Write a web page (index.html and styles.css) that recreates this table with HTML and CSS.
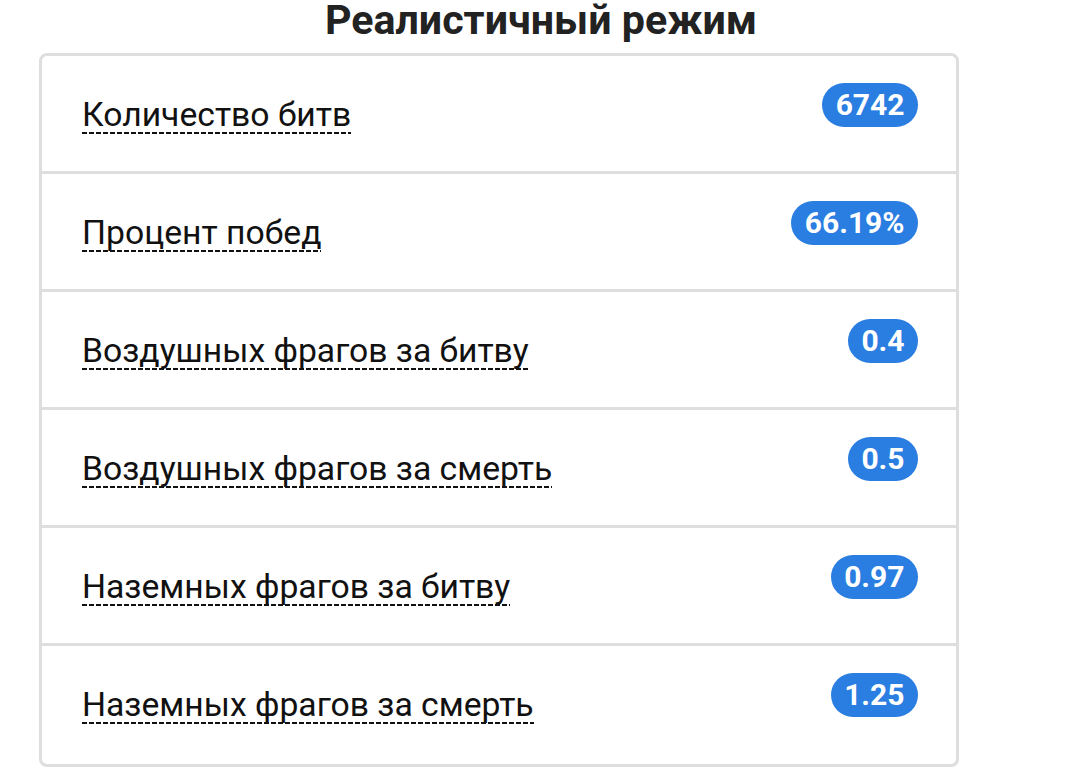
FILE: index.html
```html
<!DOCTYPE html>
<html lang="ru">
<head>
<meta charset="utf-8">
<link rel="stylesheet" href="styles.css">
</head>
<body>
<div class="page">
  <h2 class="title">Реалистичный режим</h2>
  <div class="card">
    <div class="row"><span class="label">Количество битв</span><span class="badge">6742</span></div>
    <div class="row"><span class="label">Процент побед</span><span class="badge">66.19%</span></div>
    <div class="row"><span class="label">Воздушных фрагов за битву</span><span class="badge">0.4</span></div>
    <div class="row"><span class="label">Воздушных фрагов за смерть</span><span class="badge">0.5</span></div>
    <div class="row"><span class="label">Наземных фрагов за битву</span><span class="badge">0.97</span></div>
    <div class="row"><span class="label">Наземных фрагов за смерть</span><span class="badge">1.25</span></div>
  </div>
</div>
</body>
</html>
```
FILE: styles.css
```css
html, body {
  margin: 0;
  padding: 0;
  background: #fff;
  font-family: Roboto, "Noto Sans", sans-serif;
  overflow: hidden;
}
.page {
  width: 1080px;
  height: 771px;
}
.title {
  margin: 0;
  font-size: 41.2px;
  line-height: 41px;
  font-weight: 700;
  color: #222;
  text-align: center;
  padding-left: 2px;
}
.card {
  margin: 12px 0 0 39px;
  width: 920px;
  box-sizing: border-box;
  border: 3px solid #dedede;
  border-radius: 8px;
}
.row {
  display: flex;
  justify-content: space-between;
  align-items: flex-start;
  height: 118px;
  box-sizing: border-box;
  padding: 27px 38px 0 40px;
  border-bottom: 3px solid #dedede;
}
.row:last-child {
  border-bottom: none;
}
.label {
  margin-top: 13px;
  font-size: 33.7px;
  line-height: 38px;
  color: #111;
  background-image: repeating-linear-gradient(to right, #111 0 5px, transparent 5px 7px);
  background-repeat: no-repeat;
  background-position: left bottom;
  background-size: 100% 2px;
}
.badge {
  height: 44px;
  line-height: 44px;
  padding: 0 13.5px;
  border-radius: 22px;
  background: #2a7de1;
  color: #fff;
  font-size: 30px;
  font-weight: 700;
}
```
